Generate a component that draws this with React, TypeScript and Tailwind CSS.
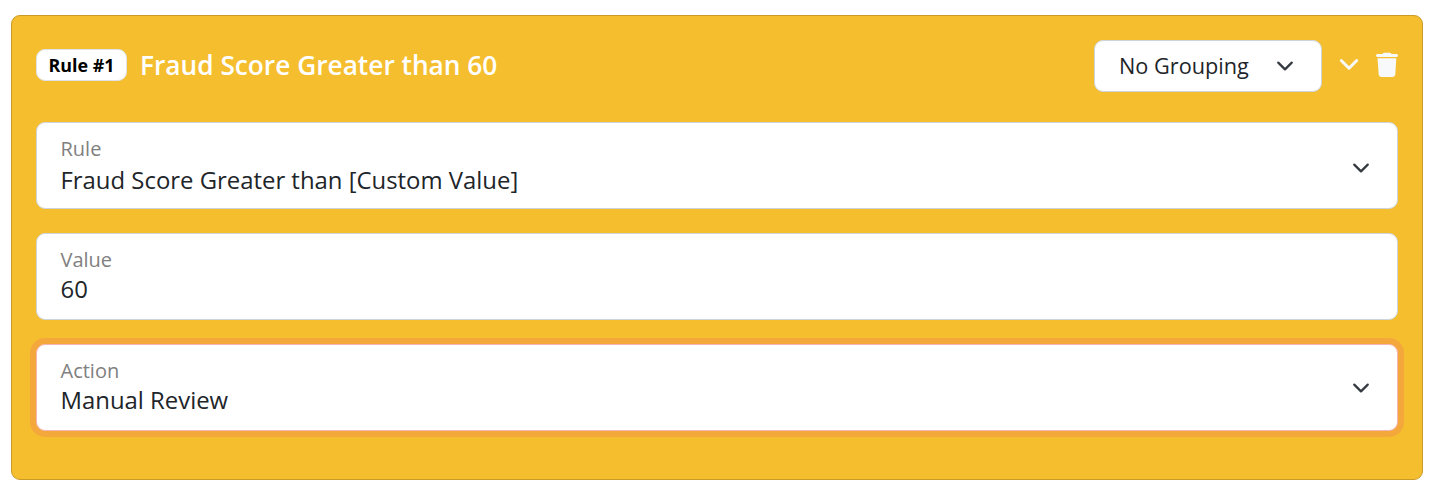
import { useState } from "react";
import { clsx } from "clsx";

type FieldProps = {
  label: string;
  value: string;
  select?: boolean;
  active?: boolean;
  valueClass?: string;
  arrowClass?: string;
};

function SelectArrow({ className }: { className?: string }) {
  return (
    <svg viewBox="0 0 16 16" className={clsx("h-[18px] w-[18px] shrink-0", className)} fill="none" stroke="#343a40" strokeWidth="2" strokeLinecap="round" strokeLinejoin="round">
      <path d="m2 5 6 6 6-6" />
    </svg>
  );
}

function Field({ label, value, select, active, valueClass, arrowClass }: FieldProps) {
  return (
    <div
      className={clsx(
        "flex h-[87px] items-center justify-between rounded-[9px] border bg-white pr-[27px] pl-[23.5px]",
        active ? "border-[#f5b5b5] ring-6 ring-[#f4a83c]" : "border-[#ced4da]"
      )}
    >
      <div className="flex h-full flex-col pt-3">
        <span className="text-[20px] leading-7 text-[#808080]">{label}</span>
        <span className={clsx("text-[23.9px] leading-[30px] text-[#212529]", valueClass)}>{value}</span>
      </div>
      {select && <SelectArrow className={arrowClass} />}
    </div>
  );
}

export default function App() {
  const [open, setOpen] = useState(true);

  return (
    <main className="h-[492px] bg-white pt-[15px] pr-[9px] pl-[11px] font-['Open_Sans',sans-serif]">
      <section className="h-[465px] rounded-[9px] border border-[#c99b26] bg-[#f5be2f] px-6 pt-6">
        <header className="flex h-[52px] items-center">
          <span className="mb-0.5 flex h-8 w-[91px] items-center justify-center rounded-[9px] border border-[#dee2e6] bg-white text-[17.9px] font-bold text-black">
            Rule #1
          </span>
          <h2 className="mb-0.5 ml-[13px] text-[26.25px] leading-10 font-semibold text-white">Fraud Score Greater than 60</h2>
          <button type="button" className="ml-auto flex h-[52px] w-[228px] items-center justify-between rounded-[9px] border border-[#ced4da] bg-white pr-[27px] pl-6 text-[21.7px] text-[#212529]">
            <span className="leading-8">No Grouping</span>
            <SelectArrow />
          </button>
          <button type="button" aria-label="Toggle rule" className="mb-0.5 ml-[17px]" onClick={() => setOpen(!open)}>
            <svg viewBox="0 0 20 20" className="h-5 w-5" fill="none" stroke="#f8f9fa" strokeWidth="3" strokeLinecap="round" strokeLinejoin="round">
              <path d="m2.3 5.5 7.7 7.7 7.7-7.7" />
            </svg>
          </button>
          <button type="button" aria-label="Delete rule" className="mb-0.5 ml-[17px]">
            <svg viewBox="0 0 22 26" className="h-[26px] w-[22px]" fill="#f8f9fa">
              <path d="M1.3 2H6.5L7.2 1.1Q7.6.7 8.2.7H13.8Q14.4.7 14.8 1.1L15.5 2H20.7Q22 2.4 22 3.5T20.7 5H1.3Q0 4.6 0 3.5T1.3 2Z" />
              <path d="M1.5 6.3H20.3L19.3 22.6Q19.1 25 16.9 25H5.1Q2.9 25 2.7 22.6Z" />
            </svg>
          </button>
        </header>

        {open && (
          <div className="mt-[30px] flex flex-col gap-6">
            <Field label="Rule" value="Fraud Score Greater than [Custom Value]" select valueClass="mt-0.5" arrowClass="mt-1" />
            <Field label="Value" value="60" />
            <Field label="Action" value="Manual Review" select active arrowClass="mt-px" />
          </div>
        )}
      </section>
    </main>
  );
}
